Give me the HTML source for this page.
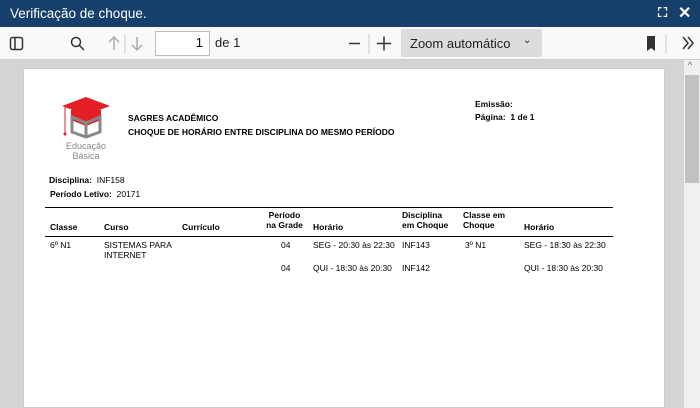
<!DOCTYPE html><html><head><style>
*{margin:0;padding:0;box-sizing:border-box}
body{width:700px;height:408px;overflow:hidden;background:#d4d4d7;font-family:"Liberation Sans",sans-serif;position:relative}
.a{position:absolute;white-space:nowrap}
.t{font-size:8.5px;color:#000;line-height:10px}
.b{font-weight:bold}
</style></head><body>
<div class="a" style="left:0;top:0;width:700px;height:27px;background:#163f6b"></div>
<div class="a" style="left:10px;top:6px;color:#fff;font-size:13.5px">Verificação de choque.</div>
<div class="a" style="left:658px;top:5px;color:#fff;font-size:13px;font-weight:bold">⛶</div>
<div class="a" style="left:678px;top:3px;color:#fff;font-size:16px;font-weight:bold">✕</div>
<div class="a" style="left:0;top:27px;width:700px;height:33px;background:#f9f9fa;border-bottom:1px solid #ccc"></div>
<svg class="a" style="left:0;top:27px" width="700" height="33">
<g fill="none" stroke="#333" stroke-width="1.5">
<rect x="10.5" y="10.5" width="12" height="12" rx="2"/><line x1="15" y1="11" x2="15" y2="22"/>
<circle cx="76" cy="15" r="4.5"/><line x1="79" y1="18" x2="84" y2="23"/>
<line x1="349" y1="16.5" x2="360" y2="16.5"/>
<line x1="377" y1="16.5" x2="391" y2="16.5"/><line x1="384" y1="9.5" x2="384" y2="23.5"/>
<path d="M683 10l5 6-5 6M688 10l5 6-5 6"/>
</g>
<g fill="none" stroke="#aaa" stroke-width="1.5"><path d="M109 15l5-5 5 5M114 10v13M132 18l5 5 5-5M137 10v13"/></g>
<line x1="125" y1="7" x2="125" y2="27" stroke="#ccc"/><line x1="369" y1="7" x2="369" y2="27" stroke="#ccc"/><line x1="666" y1="7" x2="666" y2="27" stroke="#ccc"/>
<path d="M647 9h8v15l-4-3-4 3z" fill="#333"/>
</svg>
<div class="a" style="left:155px;top:31px;width:55px;height:25px;background:#fff;border:1px solid #bbb;font-size:13px;text-align:right;padding:3px 6px 0 0">1</div>
<div class="a" style="left:215px;top:35px;font-size:13px;color:#222">de 1</div>
<div class="a" style="left:401px;top:29px;width:141px;height:28px;background:#dcdcdf;border-radius:2px;font-size:13px;padding:7px 0 0 9px;color:#222">Zoom automático<span style="position:absolute;left:122px;top:6px;font-size:10px">⌄</span></div>
<div class="a" style="left:684px;top:60px;width:16px;height:348px;background:#f0f0f0"></div>
<div class="a" style="left:685px;top:75px;width:14px;height:108px;background:#c1c1c1"></div>
<div class="a" style="left:688px;top:60px;font-size:9px;color:#555">^</div>
<div class="a" style="left:23px;top:68px;width:642px;height:340px;background:#fff;border:1px solid #ccc"></div>
<svg class="a" style="left:58px;top:95px" width="56" height="45">
<path d="M4 11L28 2 52 11 28 20z" fill="#e31e24"/><path d="M13 15v10l15 6 15-6V15" fill="#e31e24"/>
<line x1="7" y1="12" x2="7" y2="38" stroke="#e31e24"/><circle cx="7" cy="39" r="1.5" fill="#e31e24"/>
<path d="M14 22l14 6 14-6v15l-14 5-14-5z" fill="none" stroke="#888" stroke-width="3"/><line x1="28" y1="28" x2="28" y2="41" stroke="#888" stroke-width="3"/>
</svg>
<div class="a t" style="left:61px;top:141px;color:#888;text-align:center;width:50px;font-size:9px;line-height:10px">Educação<br>Básica</div>
<div class="a t b" style="left:128px;top:113px">SAGRES ACADÊMICO</div>
<div class="a t b" style="left:128px;top:127px">CHOQUE DE HORÁRIO ENTRE DISCIPLINA DO MESMO PERÍODO</div>
<div class="a t b" style="left:475px;top:99px">Emissão:</div>
<div class="a t b" style="left:475px;top:112px">Página:&nbsp; 1 de 1</div>
<div class="a t" style="left:49px;top:175px"><b>Disciplina:</b>&nbsp; INF158</div>
<div class="a t" style="left:50px;top:189px"><b>Período Letivo:</b>&nbsp; 20171</div>
<div class="a" style="left:45px;top:207px;width:568px;height:1px;background:#000"></div>
<div class="a t b" style="left:50px;top:222px">Classe</div>
<div class="a t b" style="left:104px;top:222px">Curso</div>
<div class="a t b" style="left:182px;top:222px">Currículo</div>
<div class="a t b" style="left:262px;top:210px;width:45px;text-align:center">Período<br>na Grade</div>
<div class="a t b" style="left:313px;top:222px">Horário</div>
<div class="a t b" style="left:402px;top:210px">Disciplina<br>em Choque</div>
<div class="a t b" style="left:463px;top:210px">Classe em<br>Choque</div>
<div class="a t b" style="left:524px;top:222px">Horário</div>
<div class="a" style="left:45px;top:236px;width:568px;height:1px;background:#000"></div>
<div class="a t" style="left:50px;top:240px">6º N1</div>
<div class="a t" style="left:104px;top:240px">SISTEMAS PARA<br>INTERNET</div>
<div class="a t" style="left:281px;top:240px">04</div>
<div class="a t" style="left:313px;top:240px">SEG - 20:30 às 22:30</div>
<div class="a t" style="left:402px;top:240px">INF143</div>
<div class="a t" style="left:465px;top:240px">3º N1</div>
<div class="a t" style="left:524px;top:240px">SEG - 18:30 às 22:30</div>
<div class="a t" style="left:281px;top:263px">04</div>
<div class="a t" style="left:313px;top:263px">QUI - 18:30 às 20:30</div>
<div class="a t" style="left:402px;top:263px">INF142</div>
<div class="a t" style="left:524px;top:263px">QUI - 18:30 às 20:30</div>
</body></html>
